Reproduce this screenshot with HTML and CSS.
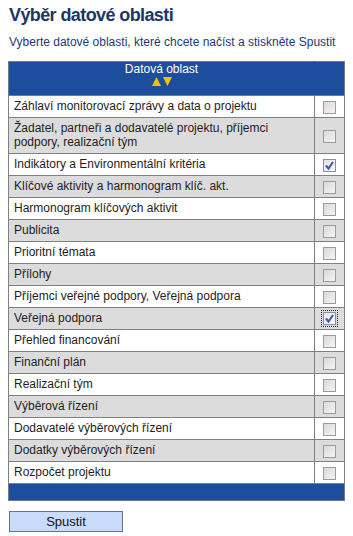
FILE: index.html
```html
<!DOCTYPE html>
<html>
<head>
  <title>Výběr datové oblasti</title>
  <link rel="stylesheet" href="styles.css">
</head>
<body>
  <h1 class="title">Výběr datové oblasti</h1>
  <p class="hint">Vyberte datové oblasti, které chcete načíst a stiskněte Spustit</p>

  <table class="areas">
    <thead>
      <tr>
        <th class="name-head">
          Datová oblast
          <div class="sort">
            <svg width="22" height="9" viewBox="0 0 22 9">
              <polygon points="1,9 5.5,0 10,9" fill="#f2c200"/>
              <polygon points="12,0 21,0 16.5,9" fill="#f2c200"/>
            </svg>
          </div>
        </th>
        <th class="check-head"></th>
      </tr>
    </thead>
    <tbody>
      <tr><td>Záhlaví monitorovací zprávy a data o projektu</td><td class="cb"><span class="box"></span></td></tr>
      <tr><td>Žadatel, partneři a dodavatelé projektu, příjemci podpory, realizační tým</td><td class="cb"><span class="box"></span></td></tr>
      <tr><td>Indikátory a Environmentální kritéria</td><td class="cb"><span class="box checked"><svg width="11" height="11" viewBox="0 0 11 11"><path d="M2 5.5 L4.5 8.5 L9 2" fill="none" stroke="#3c58a8" stroke-width="2"/></svg></span></td></tr>
      <tr><td>Klíčové aktivity a harmonogram klíč. akt.</td><td class="cb"><span class="box"></span></td></tr>
      <tr><td>Harmonogram klíčových aktivit</td><td class="cb"><span class="box"></span></td></tr>
      <tr><td>Publicita</td><td class="cb"><span class="box"></span></td></tr>
      <tr><td>Prioritní témata</td><td class="cb"><span class="box"></span></td></tr>
      <tr><td>Přílohy</td><td class="cb"><span class="box"></span></td></tr>
      <tr><td>Příjemci veřejné podpory, Veřejná podpora</td><td class="cb"><span class="box"></span></td></tr>
      <tr><td>Veřejná podpora</td><td class="cb"><span class="focus"><span class="box checked"><svg width="11" height="11" viewBox="0 0 11 11"><path d="M2 5.5 L4.5 8.5 L9 2" fill="none" stroke="#3c58a8" stroke-width="2"/></svg></span></span></td></tr>
      <tr><td>Přehled financování</td><td class="cb"><span class="box"></span></td></tr>
      <tr><td>Finanční plán</td><td class="cb"><span class="box"></span></td></tr>
      <tr><td>Realizační tým</td><td class="cb"><span class="box"></span></td></tr>
      <tr><td>Výběrová řízení</td><td class="cb"><span class="box"></span></td></tr>
      <tr><td>Dodavatelé výběrových řízení</td><td class="cb"><span class="box"></span></td></tr>
      <tr><td>Dodatky výběrových řízení</td><td class="cb"><span class="box"></span></td></tr>
      <tr><td>Rozpočet projektu</td><td class="cb"><span class="box"></span></td></tr>
    </tbody>
    <tfoot>
      <tr><td colspan="2" class="foot"></td></tr>
    </tfoot>
  </table>

  <button class="run">Spustit</button>
</body>
</html>
```

FILE: styles.css
```css
body {
  margin: 0;
  padding: 4px 8px 0 8px;
  font-family: "Liberation Sans", Arial, sans-serif;
  background: #fff;
}

.title {
  margin: 0 0 0 1px;
  font-size: 18px;
  line-height: 22px;
  letter-spacing: -0.6px;
  font-weight: bold;
  color: #1c3764;
}

.hint {
  margin: 9px 0 0 1px;
  font-size: 12px;
  line-height: 14px;
  color: #25397a;
}

.areas {
  margin-top: 12px;
  width: 337px;
  border-collapse: collapse;
  font-size: 12px;
  color: #1e1e1e;
}

.areas th {
  background: #1c4e9d;
  border: 1px solid #6f7a8a;
  color: #fff;
  font-weight: normal;
  height: 33px;
  padding: 0;
}

.name-head {
  padding-top: 2px;
  vertical-align: top;
}

.areas th.name-head {
  border-right-color: #1c4e9d;
}

.name-head .sort {
  height: 10px;
  line-height: 0;
  margin-top: 1px;
}

.check-head {
  width: 29px;
}

.areas td {
  border: 1px solid #808080;
  padding: 3px 5px 4px 5px;
  line-height: 14px;
}

.areas tbody tr:nth-child(even) td {
  background: #dcdcdc;
}

.areas td.cb {
  padding: 0;
  text-align: center;
  vertical-align: middle;
}

.box {
  display: inline-block;
  width: 11px;
  height: 11px;
  border: 1px solid #9c9c9c;
  background: linear-gradient(135deg, #d8d8d8, #f6f6f6);
  vertical-align: middle;
  line-height: 0;
}

.box.checked {
  border-color: #8a8fa0;
  background: linear-gradient(135deg, #e4e4e4, #f8f8f8);
}

.focus {
  display: inline-block;
  padding: 1px;
  border: 1px dotted #222;
  line-height: 0;
}

.areas td.foot {
  background: #1c4e9d;
  border: 1px solid #6f7a8a;
  height: 16px;
  padding: 0;
}

.run {
  display: block;
  margin: 10px 0 0 1px;
  width: 114px;
  height: 21px;
  padding: 0;
  background: #cadcfc;
  border: 1px solid #6a7286;
  font-family: "Liberation Sans", Arial, sans-serif;
  font-size: 13px;
  color: #111;
}
```
